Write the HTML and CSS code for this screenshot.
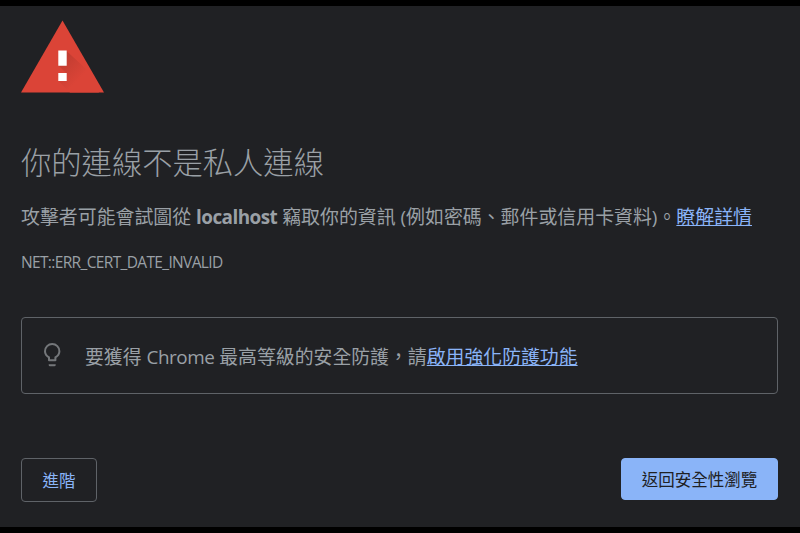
FILE: index.html
```html
<!DOCTYPE html>
<html lang="zh-TW">
<head>
<meta charset="utf-8">
<title>隱私權錯誤</title>
<link rel="stylesheet" href="styles.css">
</head>
<body>
<main class="page">
  <svg class="warning" viewBox="0 0 84 73" width="84" height="73" aria-hidden="true">
    <defs>
      <linearGradient id="shade" x1="0" y1="0" x2="1" y2="1">
        <stop offset="0" stop-color="#b93a2f"/>
        <stop offset=".6" stop-color="#db4437"/>
      </linearGradient>
    </defs>
    <path d="M41.500 .5L83 72.500H0z" fill="#db4437"/>
    <path d="M45 30.500L64 48L78 72.500H49L37 60.500L45 59V53L37 45z" fill="url(#shade)"/>
    <path d="M37.300 30.500h8.400v15.300h-8.400zM37.300 53h8.400v8h-8.400z" fill="#fff"/>
  </svg>
  <h1 class="title">你的連線不是私人連線</h1>
  <p class="message">攻擊者可能會試圖從 <strong class="host">localhost</strong> 竊取你的資訊 (例如密碼、郵件或信用卡資料)。<a href="#">瞭解詳情</a></p>
  <p class="code">NET::ERR_CERT_DATE_INVALID</p>
  <section class="tip">
    <svg class="bulb" viewBox="0 0 18 26" width="18" height="26" aria-hidden="true">
      <path d="M6 18.300v-2.900C3.200 13.700 2 11.600 2 9.200a7.200 7.200 0 0 1 14.400 0c0 2.400-1.200 4.500-4 6.200v2.900z" fill="none" stroke="#74777a" stroke-width="2" stroke-linejoin="round"/>
      <path d="M5.700 22.200h7v.8a1.300 1.300 0 0 1-1.300 1.300H7A1.300 1.300 0 0 1 5.700 23z" fill="#74777a"/>
    </svg>
    <p class="tip-text">要獲得 <span class="brand">Chrome</span> 最高等級的安全防護，請<a href="#">啟用強化防護功能</a></p>
  </section>
  <div class="actions">
    <button class="button secondary">進階</button>
    <button class="button primary">返回安全性瀏覽</button>
  </div>
</main>
</body>
</html>
```

FILE: styles.css
```css
* { box-sizing: border-box; }
body { margin: 0; background: #202124; }
.page {
  height: 533px;
  padding: 14px 22px 0 21px;
  border-top: 6px solid #000;
  border-bottom: 6px solid #000;
  color: #9aa0a6;
  font-family: "Open Sans", "Noto Sans CJK TC", sans-serif;
}
.warning { display: block; }
.title { margin: 48px 0 0; font-size: 30.300px; line-height: 44px; font-weight: 300; white-space: nowrap; }
.message { margin: 18px 0 0; font-size: 18.920px; line-height: 28px; white-space: nowrap; }
.host { letter-spacing: -0.550px; }
.brand { letter-spacing: -0.450px; }
a { color: #8ab4f8; }
.code { margin: 21px 0 0; font-size: 15.500px; line-height: 20px; letter-spacing: -0.650px; white-space: nowrap; }
.tip {
  display: flex;
  align-items: center;
  height: 77px;
  margin-top: 45px;
  padding-left: 21px;
  border: 1px solid #5f6368;
  border-radius: 4px;
}
.bulb { margin-top: -2px; }
.tip-text { margin: 2px 0 0 24px; font-size: 18.870px; line-height: 28px; white-space: nowrap; }
.actions { display: flex; justify-content: space-between; margin-top: 64px; }
.button { height: 44px; padding: 0; border: 1px solid #5f6368; border-radius: 4px; font: 16.500px "Noto Sans CJK TC", sans-serif; }
.secondary { width: 76px; background: transparent; color: #8ab4f8; }
.primary { width: 157px; height: 42px; background: #8ab4f8; border-color: #8ab4f8; color: #202124; }
```
